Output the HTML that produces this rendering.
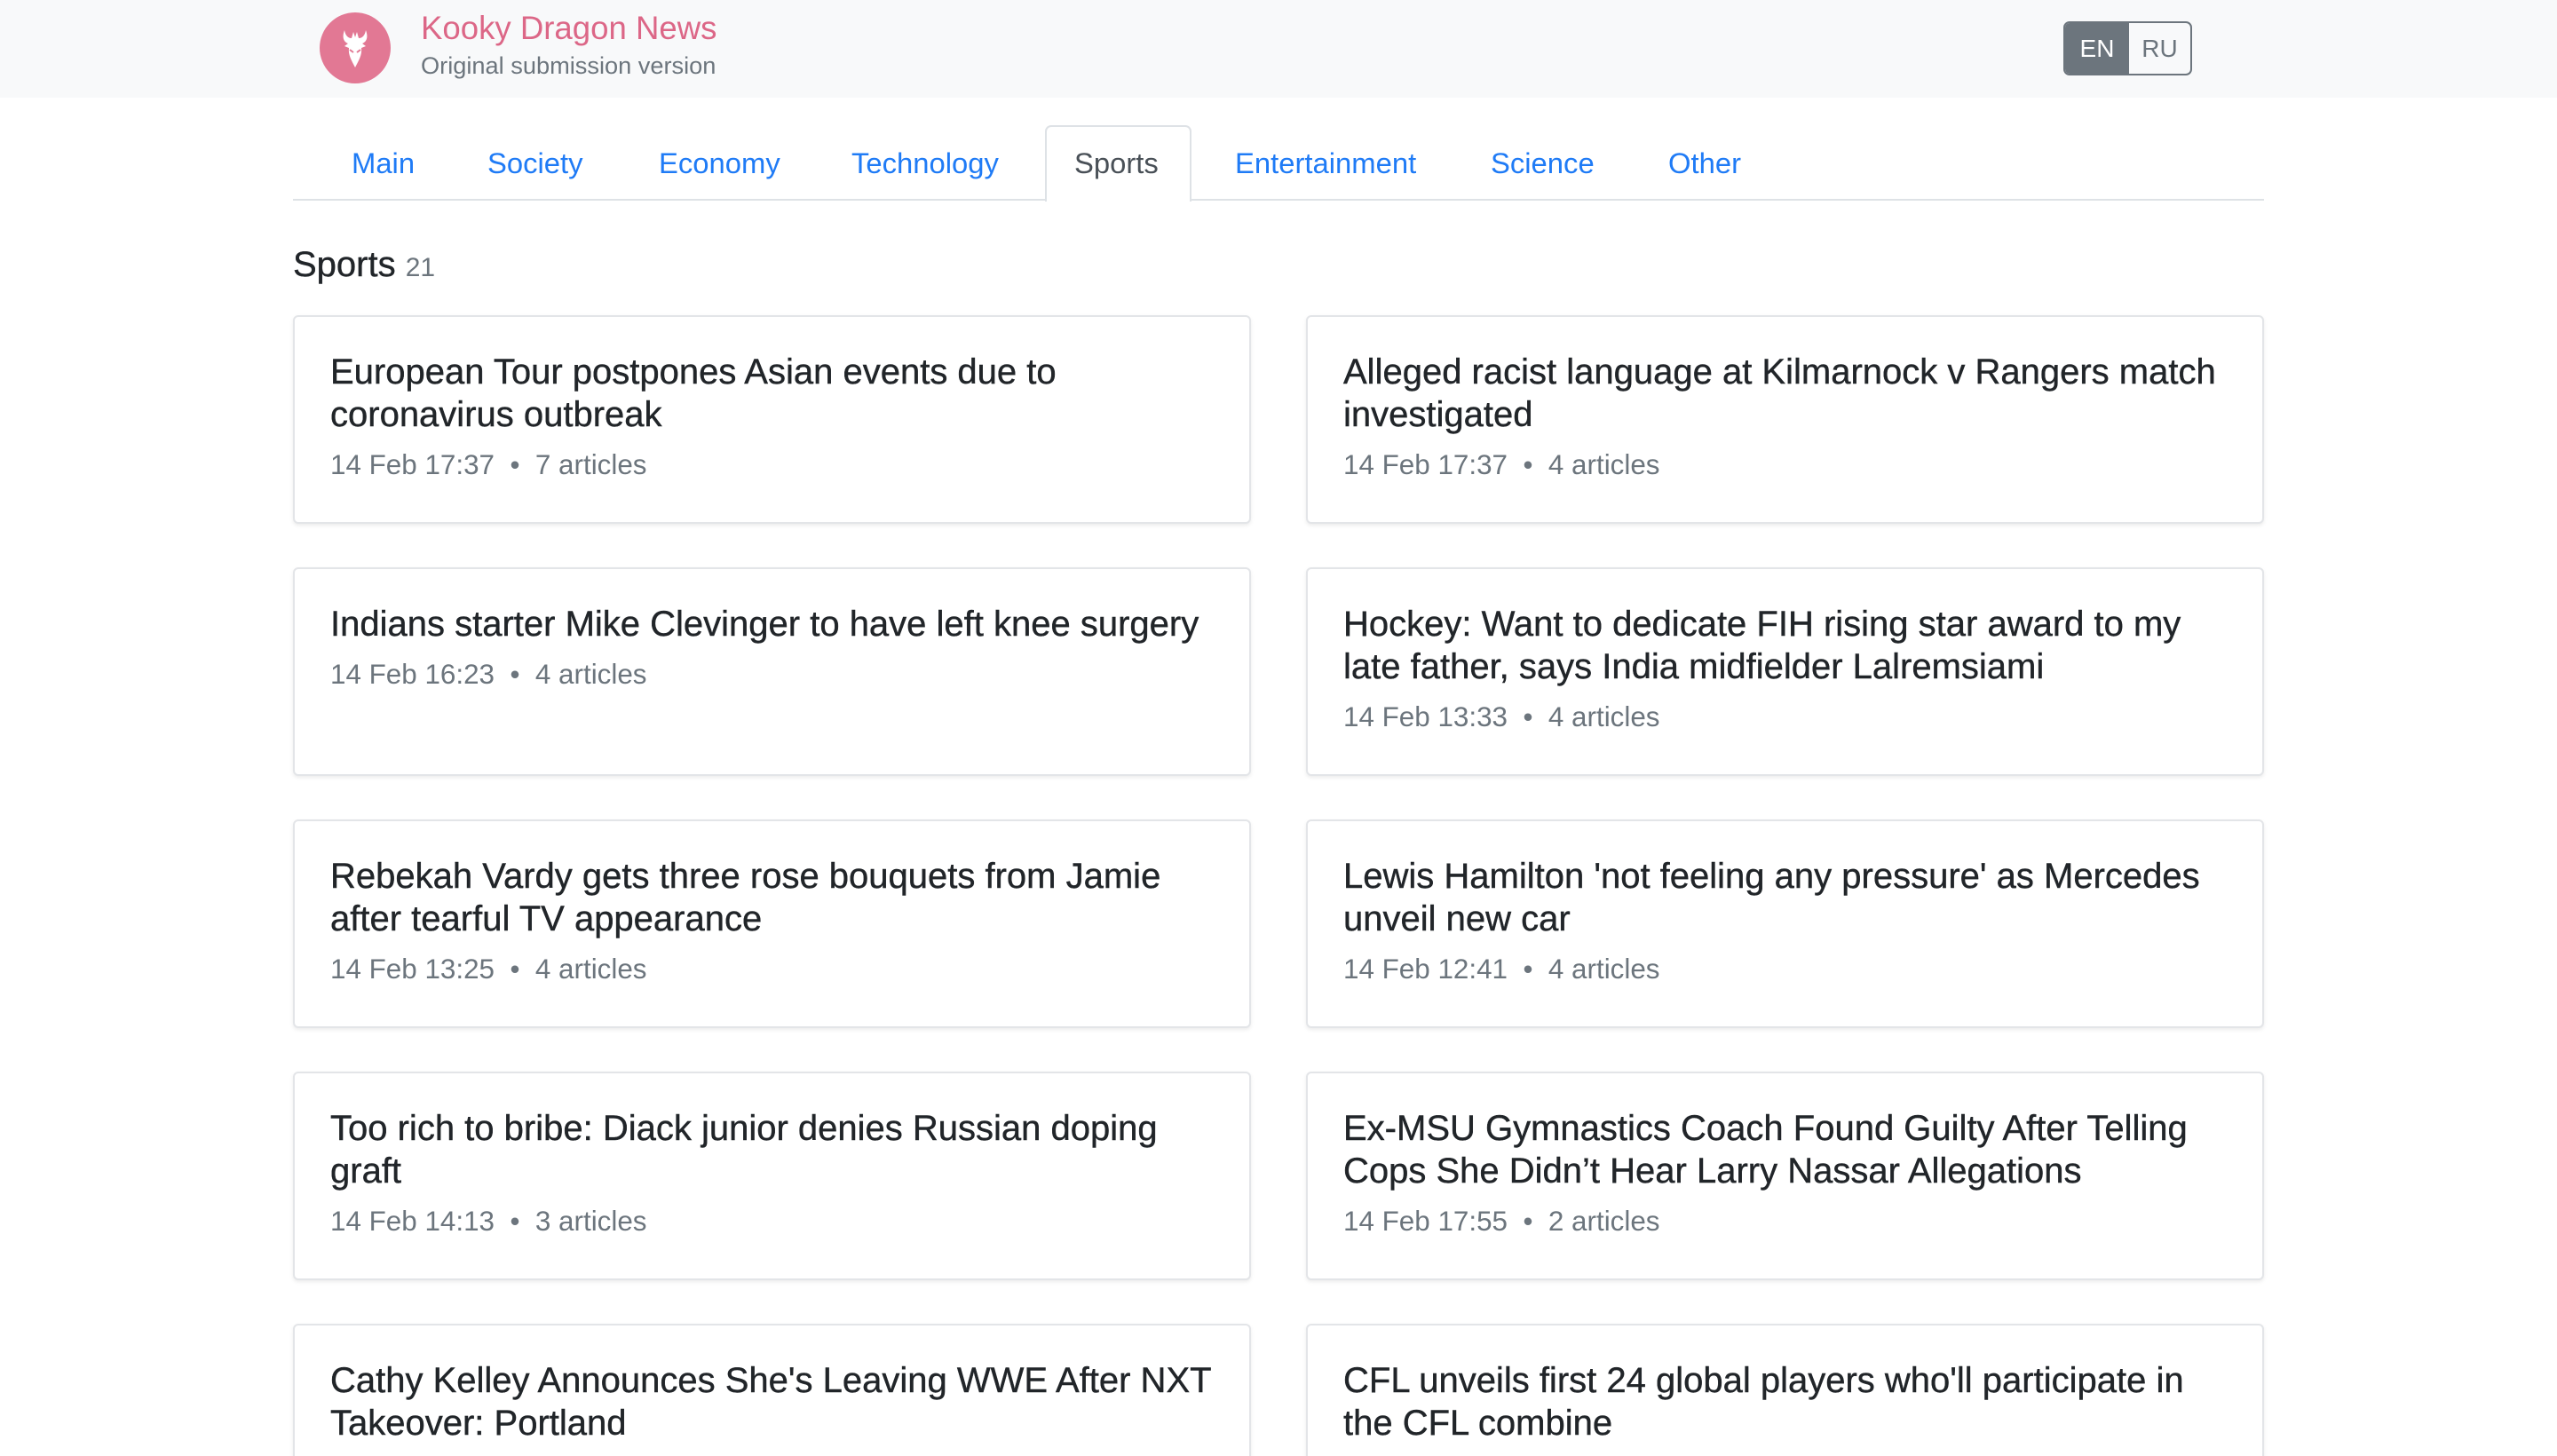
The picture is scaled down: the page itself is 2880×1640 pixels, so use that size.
<!DOCTYPE html>
<html><head><meta charset="utf-8"><style>
*{box-sizing:border-box;margin:0;padding:0}
html,body{width:2880px;height:1640px;overflow:hidden}
body{background:#fff;font-family:"Liberation Sans",sans-serif;position:relative}
#wrap{position:absolute;left:0;top:0;width:2880px;height:1640px;overflow:hidden}
.hdr{position:absolute;left:0;top:0;width:2880px;height:110px;background:#f8f9fa}
.logo{position:absolute;left:360px;top:14px;width:80px;height:80px;border-radius:50%;background:#e27894}
.t1{position:absolute;left:474px;top:11px;font-size:36.6px;color:#dc6787;white-space:nowrap}
.t2{position:absolute;left:474px;top:58px;font-size:27.2px;color:#6c757d;white-space:nowrap}
.lang{position:absolute;left:2324px;top:24px;width:145px;height:61px;border:2px solid #6c757d;border-radius:7px;overflow:hidden;font-size:28px}
.lang span{position:absolute;top:0;height:57px;line-height:57px;text-align:center}
.en{left:0;width:72px;background:#6c757d;color:#fff}
.ru{left:72px;width:69px;color:#6c757d}
.navline{position:absolute;left:330px;top:224px;width:2220px;height:2px;background:#dee2e6}
.tabbox{position:absolute;left:1177px;top:141px;width:165px;height:86px;border:2px solid #dee2e6;border-bottom:none;border-radius:7px 7px 0 0;background:#fff}
.tab{position:absolute;top:165px;font-size:32.8px;color:#1f7bf6;white-space:nowrap}
h2{position:absolute;left:330px;top:276px;font-size:40px;font-weight:normal;color:#212529;white-space:nowrap;-webkit-text-stroke:0.4px #212529}
h2 small{font-size:30px;color:#6c757d;-webkit-text-stroke:0}
.card{position:absolute;width:1079px;height:235px;border:2px solid #e3e5e8;border-radius:6px;box-shadow:0 2px 4px rgba(0,0,0,.08);padding:38px 40px 0 40px;background:#fff}
.card h3{font-size:40px;line-height:48px;font-weight:normal;color:#212529;-webkit-text-stroke:0.4px #212529}
.card p{margin-top:10px;font-size:31.4px;line-height:46px;color:#6c757d}
</style></head><body><div id="wrap">
<div class="hdr">
<div class="logo"><svg width="80" height="80" viewBox="0 0 80 80"><path d="M28 20 C25 28 27 33 32 35 L28 38 L33 40 C32 48 36 54 40 62 C44 54 48 48 47 40 L52 38 L48 35 C53 33 55 28 52 20 C51 26 48 29 44 29 L42 22 L40 28 L38 22 L36 29 C32 29 29 26 28 20Z" fill="#fff"/><path d="M34 42 L38 45 M46 42 L42 45" stroke="#e27894" stroke-width="2"/></svg></div>
<div class="t1">Kooky Dragon News</div>
<div class="t2">Original submission version</div>
<div class="lang"><span class="en">EN</span><span class="ru">RU</span></div>
</div>
<div class="navline"></div>
<div class="tabbox"></div>
<div class="tab" style="left:396px">Main</div>
<div class="tab" style="left:549px">Society</div>
<div class="tab" style="left:742px">Economy</div>
<div class="tab" style="left:959px">Technology</div>
<div class="tab" style="left:1210px;color:#495057">Sports</div>
<div class="tab" style="left:1391px">Entertainment</div>
<div class="tab" style="left:1679px">Science</div>
<div class="tab" style="left:1879px">Other</div>
<h2>Sports <small>21</small></h2>

<div class="card" style="left:330px;top:355px"><h3>European Tour postpones Asian events due to coronavirus outbreak</h3><p>14 Feb 17:37 &nbsp;•&nbsp; 7 articles</p></div>
<div class="card" style="left:1471px;top:355px"><h3>Alleged racist language at Kilmarnock v Rangers match investigated</h3><p>14 Feb 17:37 &nbsp;•&nbsp; 4 articles</p></div>
<div class="card" style="left:330px;top:639px"><h3>Indians starter Mike Clevinger to have left knee surgery</h3><p>14 Feb 16:23 &nbsp;•&nbsp; 4 articles</p></div>
<div class="card" style="left:1471px;top:639px"><h3>Hockey: Want to dedicate FIH rising star award to my late father, says India midfielder Lalremsiami</h3><p>14 Feb 13:33 &nbsp;•&nbsp; 4 articles</p></div>
<div class="card" style="left:330px;top:923px"><h3>Rebekah Vardy gets three rose bouquets from Jamie after tearful TV appearance</h3><p>14 Feb 13:25 &nbsp;•&nbsp; 4 articles</p></div>
<div class="card" style="left:1471px;top:923px"><h3>Lewis Hamilton 'not feeling any pressure' as Mercedes unveil new car</h3><p>14 Feb 12:41 &nbsp;•&nbsp; 4 articles</p></div>
<div class="card" style="left:330px;top:1207px"><h3>Too rich to bribe: Diack junior denies Russian doping graft</h3><p>14 Feb 14:13 &nbsp;•&nbsp; 3 articles</p></div>
<div class="card" style="left:1471px;top:1207px"><h3>Ex-MSU Gymnastics Coach Found Guilty After Telling Cops She Didn’t Hear Larry Nassar Allegations</h3><p>14 Feb 17:55 &nbsp;•&nbsp; 2 articles</p></div>
<div class="card" style="left:330px;top:1491px"><h3>Cathy Kelley Announces She's Leaving WWE After NXT Takeover: Portland</h3><p>14 Feb 17:00 &nbsp;•&nbsp; 2 articles</p></div>
<div class="card" style="left:1471px;top:1491px"><h3>CFL unveils first 24 global players who'll participate in the CFL combine</h3><p>14 Feb 17:00 &nbsp;•&nbsp; 2 articles</p></div>
</div></body></html>
